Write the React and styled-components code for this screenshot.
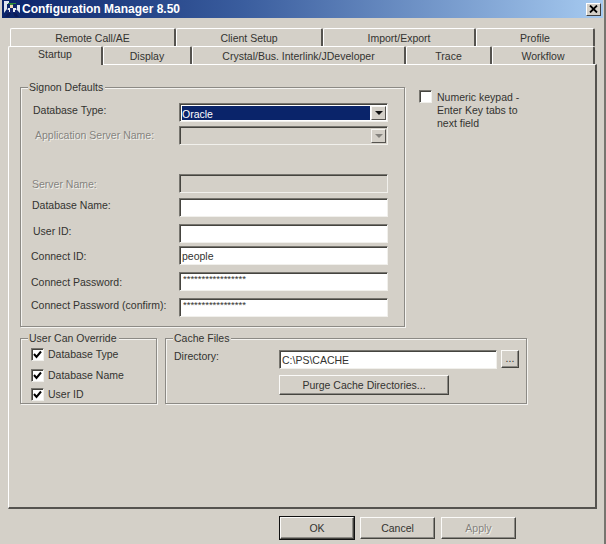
import React from "react";
import styled, { createGlobalStyle } from "styled-components";

const GlobalStyle = createGlobalStyle`
	html, body {
		margin: 0;
		padding: 0;
		background: #d4d0c8;
	}
	* {
		box-sizing: border-box;
	}
`;

const Window = styled.div`
	width: 606px;
	height: 544px;
	overflow: hidden;
	padding: 0 1px 0 2px;
	background: #d4d0c8;
	border-right: 2px solid #77756f;
	font-family: "Liberation Sans", Arial, sans-serif;
	font-size: 10.5px;
	line-height: 13px;
	color: #333330;
`;

const TitleBar = styled.div`
	height: 18px;
	display: flex;
	align-items: center;
	padding: 0 2px 0 2px;
	background: linear-gradient(90deg, #0a246a 0%, #3a5d9e 40%, #a6caf0 100%);
`;

const TitleText = styled.span`
	margin-left: 2px;
	flex: 1;
	color: #fff;
	font-weight: bold;
	font-size: 12px;
`;

const CloseButton = styled.div`
	width: 15px;
	height: 13px;
	display: flex;
	align-items: center;
	justify-content: center;
	background: #d4d0c8;
	border: 1px solid;
	border-color: #fff #404040 #404040 #fff;
`;

const TabRow = styled.div`
	display: flex;
	height: ${(p) => p.$height}px;
	margin-left: ${(p) => p.$left}px;
	margin-top: ${(p) => p.$top}px;
`;

const Tab = styled.div`
	width: ${(p) => p.$width}px;
	height: ${(p) => (p.$active ? 19 : 18)}px;
	display: flex;
	justify-content: center;
	align-items: center;
	padding-bottom: ${(p) => (p.$active ? 4 : 0)}px;
	padding-top: ${(p) => (p.$active ? 0 : 2)}px;
	background: #d4d0c8;
	border-top: 1px solid #fff;
	border-left: 1px solid #fff;
	border-right: 2px solid #55534f;
	border-top-left-radius: 2px;
	border-top-right-radius: 2px;
	position: relative;
	z-index: ${(p) => (p.$active ? 2 : 1)};
`;

const Panel = styled.div`
	width: 589px;
	height: 445px;
	margin-left: 6px;
	padding: 22px 0 0 11px;
	border-top: 1px solid #fff;
	border-left: 1px solid #fff;
	border-right: 2px solid #55534f;
	border-bottom: 2px solid #55534f;
`;

const TopRow = styled.div`
	display: flex;
	align-items: flex-start;
`;

const Group = styled.div`
	position: relative;
	width: ${(p) => p.$width}px;
	height: ${(p) => p.$height}px;
	padding-top: ${(p) => p.$padTop}px;
	border: 1px solid #8c8a85;
	box-shadow: inset 1px 1px #f4f3f0, 1px 1px #f4f3f0;
`;

const Legend = styled.span`
	position: absolute;
	top: -7px;
	left: 7px;
	padding: 0 2px 0 1px;
	background: #d4d0c8;
`;

const FormRow = styled.div`
	display: flex;
	align-items: flex-start;
	height: 19px;
	margin-top: ${(p) => p.$gap}px;
`;

const FieldLabel = styled.label`
	width: 158px;
	flex: none;
	padding-left: ${(p) => p.$indent}px;
	padding-top: ${(p) => p.$drop}px;
	white-space: nowrap;
	color: ${(p) => (p.$disabled ? "#85837e" : "inherit")};
	text-shadow: ${(p) => (p.$disabled ? "1px 1px #f1f0ec" : "none")};
`;

const Field = styled.input`
	width: ${(p) => p.$width || 209}px;
	height: ${(p) => p.$height || 19}px;
	margin: 0;
	padding: 0 0 0 2px;
	border: 1px solid;
	border-color: #77756f #f1f0ec #f1f0ec #77756f;
	box-shadow: inset 1px 1px #45443f;
	outline: none;
	border-radius: 0;
	background: ${(p) => (p.disabled ? "#d4d0c8" : "#fff")};
	font: inherit;
	color: inherit;
`;

const PasswordField = styled(Field)`
	font-size: 9.5px;
	padding: 0 0 6px 3px;
`;

const Combo = styled.div`
	width: 209px;
	height: 19px;
	display: flex;
	padding: 2px 1px 1px 2px;
	border: 1px solid;
	border-color: #77756f #f1f0ec #f1f0ec #77756f;
	box-shadow: inset 1px 1px #45443f;
	background: ${(p) => (p.$disabled ? "#d4d0c8" : "#fff")};
`;

const ComboValue = styled.div`
	flex: 1;
	padding: 2px 0 0 0;
	background: ${(p) => (p.$selected ? "#0a246a" : "transparent")};
	color: #fff;
`;

const ComboButton = styled.div`
	width: 15px;
	margin-left: 1px;
	display: flex;
	align-items: center;
	justify-content: center;
	background: #d4d0c8;
	border: 1px solid;
	border-color: #f7f6f3 #55534f #55534f #f7f6f3;
`;

const Arrow = styled.i`
	width: 0;
	height: 0;
	border-left: 4px solid transparent;
	border-right: 4px solid transparent;
	border-top: 4px solid ${(p) => (p.$disabled ? "#85837e" : "#111")};
`;

const Keypad = styled.div`
	display: flex;
	margin: 3px 0 0 14px;
`;

const KeypadText = styled.div`
	width: 95px;
	margin: 1px 0 0 5px;
`;

const CheckBox = styled.span`
	width: 13px;
	height: 13px;
	flex: none;
	display: flex;
	align-items: center;
	justify-content: center;
	background: #fff;
	border: 1px solid;
	border-color: #77756f #f1f0ec #f1f0ec #77756f;
	box-shadow: inset 1px 1px #45443f;
`;

const BottomRow = styled.div`
	display: flex;
	gap: 8px;
	margin-top: 11px;
`;

const CheckRow = styled.div`
	display: flex;
	align-items: center;
	gap: 4px;
	height: 13px;
	margin: ${(p) => p.$gap}px 0 0 10px;
`;

const CacheRow = styled.div`
	display: flex;
	align-items: flex-start;
	padding-left: ${(p) => p.$left}px;
	margin-top: ${(p) => p.$gap}px;
`;

const DirectoryLabel = styled.span`
	width: 113px;
	flex: none;
	padding-left: 8px;
`;

const Button = styled.div`
	width: ${(p) => p.$width}px;
	height: ${(p) => p.$height}px;
	display: flex;
	align-items: center;
	justify-content: center;
	background: #d4d0c8;
	border: 1px solid;
	border-color: #fbfaf8 #45443f #45443f #fbfaf8;
	box-shadow: inset -1px -1px #8c8a85;
	outline: ${(p) => (p.$default ? "1px solid #111" : "none")};
	outline-offset: 0;
	color: ${(p) => (p.$disabled ? "#85837e" : "inherit")};
	text-shadow: ${(p) => (p.$disabled ? "1px 1px #f1f0ec" : "none")};
`;

const BrowseButton = styled(Button)`
	margin-left: 4px;
	align-items: flex-end;
	padding-bottom: 2px;
`;

const Footer = styled.div`
	display: flex;
	gap: 6px;
	margin: 8px 0 0 278px;
`;

const AppIcon = () => (
	<svg width="16" height="16" viewBox="0 0 16 16">
		<path d="M0 0h5v3H3v5L0 12zM13 4h3v8l-3-3z" fill="#dfe6f0" />
		<path d="M4 2h8v1H9v1H6V3H4z" fill="#2f8a3c" />
		<rect x="6" y="4" width="3" height="3" fill="#f0d8b4" />
		<path d="M4 7h8l1 4H3z" fill="#e9eef5" />
		<path d="M6 7h3v5H6zM3 9h2v3H3zM11 9h2v3h-2z" fill="#15276f" />
		<path d="M4 12h3l-2 4H1zM9 12h3l3 4h-4z" fill="#0d1c58" />
	</svg>
);

const CloseIcon = () => (
	<svg width="9" height="8" viewBox="0 0 9 8">
		<path d="M1 0.5l7 7M8 0.5l-7 7" stroke="#000" strokeWidth="1.8" />
	</svg>
);

const CheckIcon = () => (
	<svg width="9" height="9" viewBox="0 0 9 9">
		<path d="M1 4l2.5 3L8 1.5" fill="none" stroke="#000" strokeWidth="2" />
	</svg>
);

const backTabs = [
	["Remote Call/AE", 166],
	["Client Setup", 147],
	["Import/Export", 153],
	["Profile", 119],
];

const frontTabs = [
	["Startup", 95],
	["Display", 89],
	["Crystal/Bus. Interlink/JDeveloper", 214],
	["Trace", 86],
	["Workflow", 103],
];

const App = () => {
	return (
		<Window>
			<GlobalStyle />
			<TitleBar>
				<AppIcon />
				<TitleText>Configuration Manager 8.50</TitleText>
				<CloseButton><CloseIcon /></CloseButton>
			</TitleBar>

			<TabRow $left={8} $top={10} $height={18}>
				{backTabs.map(([name, width]) => (
					<Tab key={name} $width={width}>{name}</Tab>
				))}
			</TabRow>
			<TabRow $left={6} $top={0} $height={18}>
				{frontTabs.map(([name, width], i) => (
					<Tab key={name} $width={width} $active={i === 0}>{name}</Tab>
				))}
			</TabRow>

			<Panel>
				<TopRow>
					<Group $width={385} $height={240} $padTop={15}>
						<Legend>Signon Defaults</Legend>
						<FormRow $gap={0}>
							<FieldLabel $indent={12} $drop={1}>Database Type:</FieldLabel>
							<Combo>
								<ComboValue $selected>Oracle</ComboValue>
								<ComboButton><Arrow /></ComboButton>
							</Combo>
						</FormRow>
						<FormRow $gap={4}>
							<FieldLabel $indent={14} $drop={3} $disabled>Application Server Name:</FieldLabel>
							<Combo $disabled>
								<ComboValue />
								<ComboButton><Arrow $disabled /></ComboButton>
							</Combo>
						</FormRow>
						<FormRow $gap={29}>
							<FieldLabel $indent={11} $drop={4} $disabled>Server Name:</FieldLabel>
							<Field disabled />
						</FormRow>
						<FormRow $gap={5}>
							<FieldLabel $indent={11} $drop={1}>Database Name:</FieldLabel>
							<Field readOnly />
						</FormRow>
						<FormRow $gap={7}>
							<FieldLabel $indent={12} $drop={1}>User ID:</FieldLabel>
							<Field readOnly />
						</FormRow>
						<FormRow $gap={3}>
							<FieldLabel $indent={10} $drop={4}>Connect ID:</FieldLabel>
							<Field readOnly value="people" />
						</FormRow>
						<FormRow $gap={7}>
							<FieldLabel $indent={10} $drop={4}>Connect Password:</FieldLabel>
							<PasswordField readOnly value="*****************" />
						</FormRow>
						<FormRow $gap={7}>
							<FieldLabel $indent={10} $drop={1}>Connect Password (confirm):</FieldLabel>
							<PasswordField readOnly value="*****************" />
						</FormRow>
					</Group>
					<Keypad>
						<CheckBox />
						<KeypadText>Numeric keypad - Enter Key tabs to next field</KeypadText>
					</Keypad>
				</TopRow>

				<BottomRow>
					<Group $width={137} $height={66} $padTop={9}>
						<Legend>User Can Override</Legend>
						<CheckRow $gap={0}><CheckBox><CheckIcon /></CheckBox>Database Type</CheckRow>
						<CheckRow $gap={8}><CheckBox><CheckIcon /></CheckBox>Database Name</CheckRow>
						<CheckRow $gap={6}><CheckBox><CheckIcon /></CheckBox>User ID</CheckRow>
					</Group>
					<Group $width={362} $height={66} $padTop={11}>
						<Legend>Cache Files</Legend>
						<CacheRow $left={0} $gap={0}>
							<DirectoryLabel>Directory:</DirectoryLabel>
							<Field readOnly $width={218} value="C:\PS\CACHE" />
							<BrowseButton $width={18} $height={18}>...</BrowseButton>
						</CacheRow>
						<CacheRow $left={113} $gap={6}>
							<Button $width={170} $height={20}>Purge Cache Directories...</Button>
						</CacheRow>
					</Group>
				</BottomRow>
			</Panel>

			<Footer>
				<Button $width={74} $height={22} $default>OK</Button>
				<Button $width={75} $height={22}>Cancel</Button>
				<Button $width={75} $height={22} $disabled>Apply</Button>
			</Footer>
		</Window>
	);
};

export default App;
